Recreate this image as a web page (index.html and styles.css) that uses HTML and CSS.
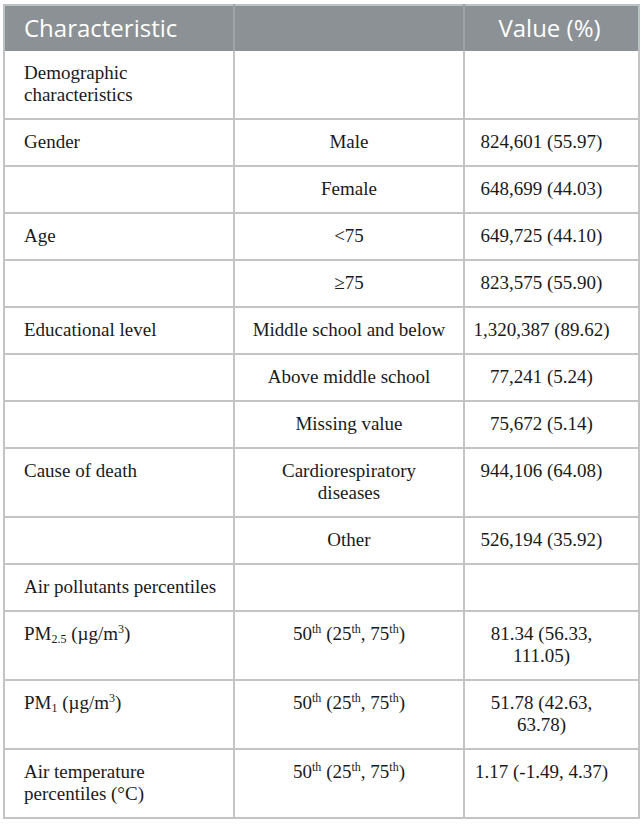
FILE: index.html
```html
<!DOCTYPE html>
<html>
<head>
<meta charset="utf-8">
<link rel="stylesheet" href="styles.css">
</head>
<body>
<table class="tbl">
  <colgroup>
    <col class="c1"><col class="c2"><col class="c3">
  </colgroup>
  <thead>
    <tr><th class="l">Characteristic</th><th></th><th class="v">Value (%)</th></tr>
  </thead>
  <tbody>
    <tr><td class="l">Demographic characteristics</td><td></td><td></td></tr>
    <tr><td class="l">Gender</td><td>Male</td><td class="v">824,601 (55.97)</td></tr>
    <tr><td class="l"></td><td>Female</td><td class="v">648,699 (44.03)</td></tr>
    <tr><td class="l">Age</td><td>&lt;75</td><td class="v">649,725 (44.10)</td></tr>
    <tr><td class="l"></td><td>&ge;75</td><td class="v">823,575 (55.90)</td></tr>
    <tr><td class="l">Educational level</td><td>Middle school and below</td><td class="v">1,320,387 (89.62)</td></tr>
    <tr><td class="l"></td><td>Above middle school</td><td class="v">77,241 (5.24)</td></tr>
    <tr><td class="l"></td><td>Missing value</td><td class="v">75,672 (5.14)</td></tr>
    <tr><td class="l">Cause of death</td><td>Cardiorespiratory diseases</td><td class="v">944,106 (64.08)</td></tr>
    <tr><td class="l"></td><td>Other</td><td class="v">526,194 (35.92)</td></tr>
    <tr><td class="l">Air pollutants percentiles</td><td></td><td></td></tr>
    <tr><td class="l">PM<sub>2.5</sub> (&micro;g/m<sup>3</sup>)</td><td>50<sup>th</sup> (25<sup>th</sup>, 75<sup>th</sup>)</td><td class="v">81.34 (56.33, 111.05)</td></tr>
    <tr><td class="l">PM<sub>1</sub> (&micro;g/m<sup>3</sup>)</td><td>50<sup>th</sup> (25<sup>th</sup>, 75<sup>th</sup>)</td><td class="v">51.78 (42.63, 63.78)</td></tr>
    <tr><td class="l">Air temperature percentiles (&deg;C)</td><td>50<sup>th</sup> (25<sup>th</sup>, 75<sup>th</sup>)</td><td class="v">1.17 (-1.49, 4.37)</td></tr>
  </tbody>
</table>
</body>
</html>
```
FILE: styles.css
```css
html, body {
  margin: 0;
  padding: 0;
  background: #ffffff;
}
body {
  padding: 4px 4px 0 3px;
}
.tbl {
  border-collapse: collapse;
  width: 635px;
  table-layout: fixed;
  border: 2px solid #b9c4c2;
  color: #1a1a1a;
}
.c1 { width: 230px; }
.c2 { width: 230px; }
.c3 { width: 175px; }
.tbl thead th {
  background: #8b9194;
  color: #ffffff;
  font-family: "Open Sans", "Noto Sans", sans-serif;
  font-weight: 400;
  font-size: 24px;
  height: 43px;
  padding: 0 8px 2px 8px;
  border-left: 2px solid #9ea3a6;
  text-align: center;
  vertical-align: middle;
}
.tbl thead th.l {
  text-align: left;
  padding-left: 19px;
  border-left: none;
}
.tbl thead th.v {
  padding-left: 6px;
  padding-right: 10px;
}
.tbl td {
  font-family: "Liberation Serif", "Tinos", "Times New Roman", "DejaVu Serif", serif;
  font-size: 19px;
  border: 2px solid #c4c4c4;
  padding: 11px 17px 12px 17px;
  line-height: 22px;
  vertical-align: top;
  text-align: center;
}
.tbl td.l {
  text-align: left;
  padding-left: 19px;
  padding-right: 15px;
}
.tbl td.v {
  padding-left: 6px;
  padding-right: 26px;
}
.tbl tbody tr:first-child td {
  border-top: none;
}
sub, sup {
  font-size: 12px;
  line-height: 0;
  position: relative;
  vertical-align: baseline;
}
sup { top: -7px; }
sub { top: 3px; }
```
